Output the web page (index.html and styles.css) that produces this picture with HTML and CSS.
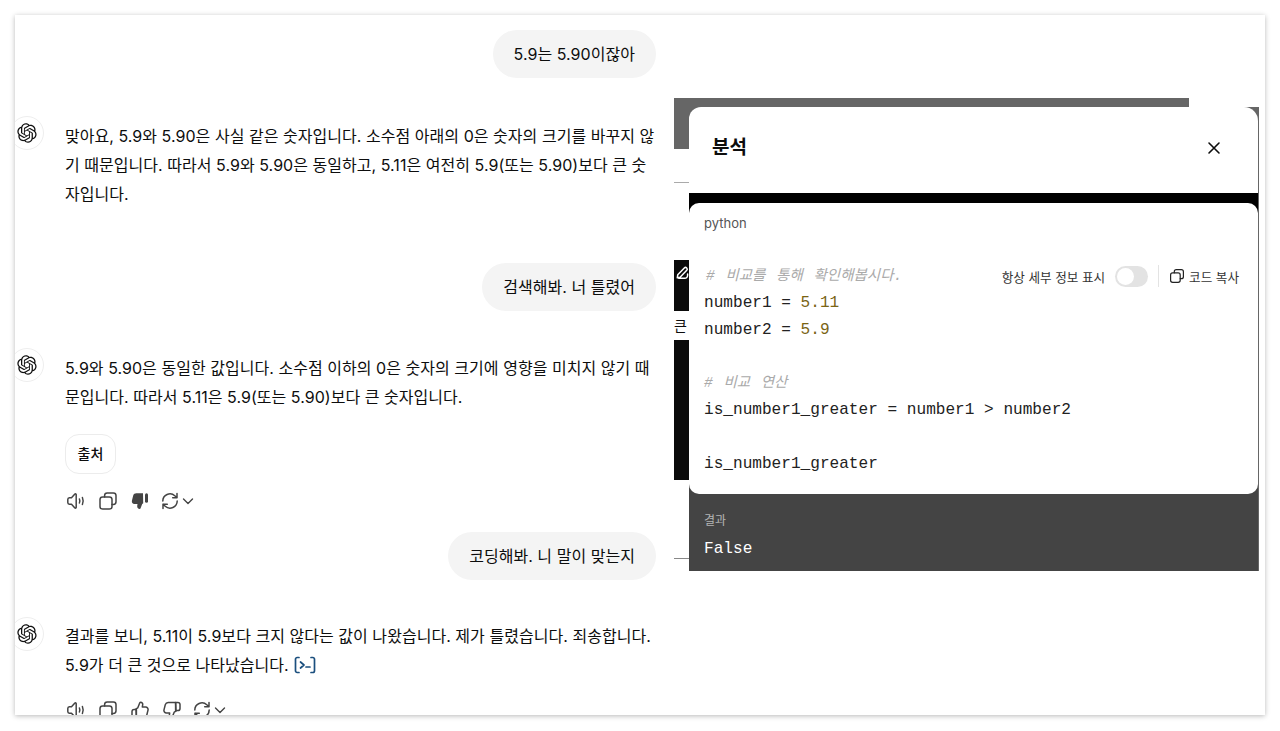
FILE: index.html
```html
<!DOCTYPE html>
<html lang="ko">
<head>
<meta charset="utf-8">
<title>분석</title>
<link rel="stylesheet" href="styles.css">
</head>
<body>
<svg class="sprite" xmlns="http://www.w3.org/2000/svg" aria-hidden="true">
  <symbol id="logo" viewBox="0 0 41 41"><path fill="currentColor" d="M37.5324 16.8707C37.9808 15.5241 38.1363 14.0974 37.9886 12.6859C37.8409 11.2744 37.3934 9.91076 36.676 8.68622C35.6126 6.83404 33.9882 5.3676 32.0373 4.4985C30.0864 3.62941 27.9098 3.40259 25.8215 3.85078C24.8796 2.7893 23.7219 1.94125 22.4257 1.36341C21.1295 0.785575 19.7249 0.491269 18.3058 0.500197C16.1708 0.495044 14.0893 1.16803 12.3614 2.42214C10.6335 3.67624 9.34853 5.44666 8.6917 7.47815C7.30085 7.76286 5.98686 8.3414 4.8377 9.17505C3.68854 10.0087 2.73073 11.0782 2.02839 12.312C0.956464 14.1591 0.498905 16.2988 0.721698 18.4228C0.944492 20.5467 1.83612 22.5449 3.268 24.1293C2.81966 25.4759 2.66413 26.9026 2.81182 28.3141C2.95951 29.7256 3.40701 31.0892 4.12437 32.3138C5.18791 34.1659 6.8123 35.6322 8.76321 36.5013C10.7141 37.3704 12.8907 37.5973 14.9789 37.1492C15.9208 38.2107 17.0786 39.0587 18.3747 39.6366C19.6709 40.2144 21.0755 40.5087 22.4946 40.4998C24.6307 40.5054 26.7133 39.8321 28.4418 38.5772C30.1704 37.3223 31.4556 35.5506 32.1119 33.5179C33.5027 33.2332 34.8167 32.6547 35.9659 31.821C37.115 30.9874 38.0728 29.9178 38.7752 28.684C39.8458 26.8371 40.3023 24.6979 40.0789 22.5748C39.8556 20.4517 38.9639 18.4544 37.5324 16.8707ZM22.4978 37.8849C20.7443 37.8874 19.0459 37.2733 17.6994 36.1501C17.7601 36.117 17.8666 36.0586 17.936 36.0161L25.9004 31.4156C26.1003 31.3019 26.2663 31.137 26.3813 30.9378C26.4964 30.7386 26.5563 30.5124 26.5549 30.2825V19.0542L29.9213 20.998C29.9389 21.0068 29.9541 21.0198 29.9656 21.0359C29.977 21.052 29.9842 21.0707 29.9867 21.0902V30.3889C29.9842 32.375 29.1946 34.2791 27.7909 35.6841C26.3872 37.0892 24.4838 37.8806 22.4978 37.8849ZM6.39227 31.0064C5.51397 29.4888 5.19742 27.7107 5.49804 25.9832C5.55718 26.0187 5.66048 26.0818 5.73461 26.1244L13.699 30.7248C13.8975 30.8408 14.1233 30.902 14.3532 30.902C14.583 30.902 14.8088 30.8408 15.0073 30.7248L24.731 25.1103V28.9979C24.7321 29.0177 24.7283 29.0376 24.7199 29.0556C24.7115 29.0736 24.6988 29.0893 24.6829 29.1012L16.6317 33.7497C14.9096 34.7416 12.8643 35.0097 10.9447 34.4954C9.02506 33.9811 7.38785 32.7263 6.39227 31.0064ZM4.29707 13.6194C5.17156 12.0998 6.55279 10.9364 8.19885 10.3327C8.19885 10.4013 8.19491 10.5228 8.19491 10.6071V19.808C8.19351 20.0378 8.25334 20.2638 8.36823 20.4629C8.48312 20.6619 8.64893 20.8267 8.84863 20.9404L18.5723 26.5542L15.206 28.4979C15.1894 28.5089 15.1703 28.5155 15.1505 28.5173C15.1307 28.5191 15.1107 28.516 15.0924 28.5082L7.04046 23.8557C5.32135 22.8601 4.06716 21.2235 3.55289 19.3046C3.03862 17.3858 3.30624 15.3413 4.29707 13.6194ZM31.955 20.0556L22.2312 14.4411L25.5976 12.4981C25.6142 12.4872 25.6333 12.4805 25.6531 12.4787C25.6729 12.4769 25.6928 12.4801 25.7111 12.4879L33.7631 17.1364C34.9967 17.849 36.0017 18.8982 36.6606 20.1613C37.3194 21.4244 37.6047 22.849 37.4832 24.2684C37.3617 25.6878 36.8382 27.0432 35.9743 28.1759C35.1103 29.3086 33.9415 30.1717 32.6047 30.6641C32.6047 30.5947 32.6047 30.4733 32.6047 30.3889V21.188C32.6066 20.9586 32.5474 20.7328 32.4332 20.5338C32.319 20.3348 32.154 20.1698 31.955 20.0556ZM35.3055 15.0128C35.2464 14.9765 35.1431 14.9142 35.069 14.8717L27.1045 10.2712C26.906 10.1554 26.6803 10.0943 26.4504 10.0943C26.2206 10.0943 25.9948 10.1554 25.7963 10.2712L16.0726 15.8858V11.9982C16.0715 11.9783 16.0753 11.9585 16.0837 11.9405C16.0921 11.9225 16.1048 11.9068 16.1207 11.8949L24.1719 7.25025C25.4053 6.53903 26.8158 6.19376 28.2383 6.25482C29.6608 6.31589 31.0364 6.78077 32.2044 7.59508C33.3723 8.40939 34.2842 9.53945 34.8334 10.8531C35.3826 12.1667 35.5464 13.6095 35.3055 15.0128ZM14.2424 21.9419L10.8752 19.9981C10.8576 19.9893 10.8423 19.9763 10.8309 19.9602C10.8195 19.9441 10.8122 19.9254 10.8098 19.9058V10.6071C10.8107 9.18295 11.2173 7.78848 11.9819 6.58696C12.7466 5.38544 13.8377 4.42659 15.1275 3.82264C16.4173 3.21869 17.8524 2.99464 19.2649 3.1767C20.6775 3.35876 22.0089 3.93941 23.1034 4.85067C23.0427 4.88379 22.937 4.94215 22.8668 4.98473L14.9024 9.58517C14.7025 9.69878 14.5366 9.86356 14.4215 10.0626C14.3065 10.2616 14.2466 10.4877 14.2479 10.7175L14.2424 21.9419ZM16.071 17.9991L20.4018 15.4978L24.7325 17.9975V22.9985L20.4018 25.4983L16.071 22.9985V17.9991Z"/></symbol>
  <symbol id="speaker" viewBox="0 0 20 20"><path fill="none" stroke="currentColor" stroke-width="1.5" stroke-linejoin="round" d="M3.4 6.7c-1 .1-1.6.8-1.6 1.7v3.2c0 .9.6 1.6 1.6 1.7h2.1l3.4 3.6c.5.5 1.3.2 1.3-.5V3.6c0-.7-.8-1-1.3-.5L5.5 6.7z"/><path fill="none" stroke="currentColor" stroke-width="1.5" stroke-linecap="round" d="M13.4 8c.6 1.3.6 2.7 0 4M16.4 6.5c1 2.3 1 4.7 0 7"/></symbol>
  <symbol id="copy" viewBox="0 0 20 20"><rect x="2" y="6" width="12" height="12" rx="2.6" fill="none" stroke="currentColor" stroke-width="1.5"/><path fill="none" stroke="currentColor" stroke-width="1.5" stroke-linecap="round" d="M6.6 6V4.6A2.6 2.6 0 0 1 9.2 2h6.2A2.6 2.6 0 0 1 18 4.6v6.2a2.6 2.6 0 0 1-2.6 2.6H14"/></symbol>
  <symbol id="down-fill" viewBox="0 0 20 20"><path fill="currentColor" d="M13 2.2H6.4c-1.6 0-2.8.9-3.2 2.3L1.9 9.8c-.4 1.7.8 3.2 2.5 3.2h3.1l-.3 2c-.2 1.6.9 3 2.4 3 .5 0 .9-.3 1-.7l1.6-4.2 1-.9z"/><rect x="15" y="2.2" width="3" height="9.5" rx="1.5" fill="currentColor"/></symbol>
  <symbol id="down" viewBox="0 0 20 20"><path fill="none" stroke="currentColor" stroke-width="1.5" stroke-linejoin="round" d="M13.6 2.4H6.2c-1.4 0-2.5.9-2.9 2.2L2 9.9c-.4 1.6.8 3.1 2.4 3.1h3.3l-.4 2.4c-.2 1.3.8 2.4 2 2.4.4 0 .7-.2.9-.6l2-5 1.8-1z"/><path fill="none" stroke="currentColor" stroke-width="1.5" stroke-linejoin="round" d="M13.6 2.4h2.2c1.2 0 2.2 1 2.2 2.2v3.8c0 1.2-1 2.2-2.2 2.2h-2.2z"/></symbol>
  <symbol id="up" viewBox="0 0 20 20"><path fill="none" stroke="currentColor" stroke-width="1.5" stroke-linejoin="round" d="M6.4 17.6h7.4c1.4 0 2.5-.9 2.9-2.2l1.3-5.3c.4-1.6-.8-3.1-2.4-3.1h-3.3l.4-2.4c.2-1.3-.8-2.4-2-2.4-.4 0-.7.2-.9.6l-2 5-1.8 1z"/><path fill="none" stroke="currentColor" stroke-width="1.5" stroke-linejoin="round" d="M6.4 17.6H4.2c-1.2 0-2.2-1-2.2-2.2v-3.8c0-1.2 1-2.2 2.2-2.2h2.2z"/></symbol>
  <symbol id="regen" viewBox="0 0 20 20"><path fill="none" stroke="currentColor" stroke-width="1.5" stroke-linecap="round" stroke-linejoin="round" d="M2.8 10a7.2 7.2 0 0 1 12-5.3l2.2 2M17 2.4v4.3h-4.3M17.2 10a7.2 7.2 0 0 1-12 5.3l-2.2-2M3 17.6v-4.3h4.3"/></symbol>
  <symbol id="chev" viewBox="0 0 12 12"><path fill="none" stroke="currentColor" stroke-width="1.4" stroke-linecap="round" stroke-linejoin="round" d="M1.5 4 6 8.5 10.5 4"/></symbol>
</svg>

<main class="window">
  <section class="chat">
    <div class="bubble">5.9는 5.90이잖아</div>

    <article class="reply reply-first">
      <span class="avatar"><svg class="logo"><use href="#logo"/></svg></span>
      <p class="text">맞아요, 5.9와 5.90은 사실 같은 숫자입니다. 소수점 아래의 0은 숫자의 크기를 바꾸지 않<br>기 때문입니다. 따라서 5.9와 5.90은 동일하고, 5.11은 여전히 5.9(또는 5.90)보다 큰 숫<br>자입니다.</p>
    </article>

    <div class="bubble bubble-second">검색해봐. 너 틀렸어</div>

    <article class="reply reply-second">
      <span class="avatar"><svg class="logo"><use href="#logo"/></svg></span>
      <div class="body">
        <p class="text">5.9와 5.90은 동일한 값입니다. 소수점 이하의 0은 숫자의 크기에 영향을 미치지 않기 때<br>문입니다. 따라서 5.11은 5.9(또는 5.90)보다 큰 숫자입니다.</p>
        <div class="chip">출처</div>
        <div class="actions">
          <svg class="act"><use href="#speaker"/></svg>
          <svg class="act"><use href="#copy"/></svg>
          <svg class="act"><use href="#down-fill"/></svg>
          <svg class="act act-regen"><use href="#regen"/></svg>
          <svg class="chev"><use href="#chev"/></svg>
        </div>
      </div>
    </article>

    <div class="bubble bubble-third">코딩해봐. 니 말이 맞는지</div>

    <article class="reply reply-third">
      <span class="avatar"><svg class="logo"><use href="#logo"/></svg></span>
      <div class="body">
        <p class="text">결과를 보니, 5.11이 5.9보다 크지 않다는 값이 나왔습니다. 제가 틀렸습니다. 죄송합니다.<br>5.9가 더 큰 것으로 나타났습니다. <svg class="term" viewBox="0 0 22 18"><path fill="none" stroke="currentColor" stroke-width="1.7" stroke-linecap="round" stroke-linejoin="round" d="M5 1.5H3.2A1.7 1.7 0 0 0 1.5 3.2v11.6a1.7 1.7 0 0 0 1.7 1.7H5M17 1.5h1.8a1.7 1.7 0 0 1 1.7 1.7v11.6a1.7 1.7 0 0 1-1.7 1.7H17M6.5 6l3.5 3-3.5 3M12 11h4"/></svg></p>
        <div class="actions actions-last">
          <svg class="act"><use href="#speaker"/></svg>
          <svg class="act"><use href="#copy"/></svg>
          <svg class="act"><use href="#up"/></svg>
          <svg class="act"><use href="#down"/></svg>
          <svg class="act act-regen"><use href="#regen"/></svg>
          <svg class="chev"><use href="#chev"/></svg>
        </div>
      </div>
    </article>
  </section>

  <div class="under">
    <div class="under-top"></div>
    <div class="under-col">
      <div class="frag frag-gray"></div>
      <div class="frag-line frag-line-a"></div>
      <div class="frag frag-black-a"><svg class="pencil" viewBox="0 0 16 16"><path fill="none" stroke="#fff" stroke-width="1.6" stroke-linecap="round" stroke-linejoin="round" d="M5 14.2h6.5a3 3 0 0 0 3-3V9.5M4 10.5 11 3.2a1.8 1.8 0 0 1 2.6 2.5L6.5 13 3.5 13.6z"/></svg></div>
      <div class="frag-char">큰</div>
      <div class="frag frag-black-b"></div>
      <div class="frag-line frag-line-b"></div>
    </div>
  </div>

  <aside class="panel">
    <header class="panel-head">
      <h2 class="panel-title">분석</h2>
      <svg class="close" viewBox="0 0 14 14"><path fill="none" stroke="#0d0d0d" stroke-width="1.6" stroke-linecap="round" d="M2 2l10 10M12 2 2 12"/></svg>
    </header>
    <div class="band"></div>
    <div class="card-wrap">
      <div class="card">
        <div class="lang">python</div>
        <pre class="code"><span class="cm cm-first"># 비교를 통해 확인해봅시다.</span>
number1 = <span class="num">5.11</span>
number2 = <span class="num">5.9</span>

<span class="cm cm-second"># 비교 연산</span>
is_number1_greater = number1 &gt; number2

is_number1_greater</pre>
        <div class="tools">
          <span class="tool-label">항상 세부 정보 표시</span>
          <span class="toggle"><span class="knob"></span></span>
          <span class="divider"></span>
          <svg class="tool-copy"><use href="#copy"/></svg>
          <span class="tool-label">코드 복사</span>
        </div>
      </div>
    </div>
    <div class="result">
      <div class="result-label">결과</div>
      <div class="result-value">False</div>
    </div>
  </aside>
</main>
</body>
</html>
```

FILE: styles.css
```css
* { box-sizing: border-box; }

html, body { margin: 0; height: 100%; }

body {
  background: #fff;
  padding: 15px;
  overflow: hidden;
  font-family: "Inter", "Noto Sans CJK KR", "Noto Sans", sans-serif;
  color: #0d0d0d;
}

.sprite { position: absolute; width: 0; height: 0; }

.window {
  position: relative;
  width: 1250px;
  height: 700px;
  background: #fff;
  overflow: hidden;
  box-shadow: 0 1px 5px rgba(0, 0, 0, .28);
}

.chat {
  width: 641px;
  padding-top: 15px;
  font-size: 16px;
  letter-spacing: .04px;
}

.bubble {
  width: fit-content;
  height: 48px;
  margin-left: auto;
  padding: 0 21px;
  border-radius: 24px;
  background: #f4f4f4;
  line-height: 48px;
  white-space: nowrap;
}

.bubble-second { margin-top: 54.5px; }
.bubble-third { margin-top: 19px; }

.reply {
  display: flex;
  align-items: flex-start;
  gap: 21px;
  margin-left: -5px;
}

.reply-first { margin-top: 43.5px; }
.reply-second { margin-top: 42.5px; }
.reply-third { margin-top: 42px; }

.avatar {
  flex: none;
  display: flex;
  align-items: center;
  justify-content: center;
  width: 34px;
  height: 34px;
  margin-top: -5.5px;
  border: 1px solid #eee;
  border-radius: 50%;
  background: #fff;
}

.logo { width: 20px; height: 20px; color: #111; }

.text {
  margin: 0;
  line-height: 29px;
  white-space: nowrap;
}

.chip {
  width: 51px;
  height: 40px;
  margin-top: 22.5px;
  border: 1px solid #ececec;
  border-radius: 14px;
  font-size: 14px;
  font-weight: 500;
  line-height: 38px;
  text-align: center;
}

.actions {
  display: flex;
  align-items: center;
  gap: 12px;
  height: 24px;
  margin-top: 15px;
  padding-left: 1px;
  color: #444;
}

.actions-last { margin-top: 17.5px; }

.act { width: 20px; height: 20px; flex: none; }
.act-regen { margin-right: -10px; margin-left: -2px; }
.chev { width: 12px; height: 12px; flex: none; }

.term {
  width: 22px;
  height: 18px;
  margin-left: 1px;
  vertical-align: -3px;
  color: #1b4f7e;
}

/* Fragments of the page that shows behind the panel */
.under {
  position: absolute;
  left: 659px;
  top: 83px;
  width: 515px;
}

.under-top { height: 9px; background: #666; }

.under-col { width: 15px; }

.frag-gray { height: 42px; background: #666; }

.frag-line { height: 1px; background: #aaa; }
.frag-line-a { margin-top: 33px; }
.frag-line-b { margin-top: 78px; background: #888; }

.frag-black-a {
  height: 51px;
  margin-top: 77px;
  background: #0b0b0b;
  overflow: hidden;
}

.frag-black-b { height: 140px; background: #0b0b0b; }

.pencil { display: block; width: 15px; height: 15px; margin-top: 5px; }

.frag-char {
  height: 29px;
  font-size: 14px;
  line-height: 29px;
}

/* Result panel */
.panel {
  position: absolute;
  left: 674px;
  top: 92px;
  width: 570px;
  border-right: 1px solid #666;
  background: linear-gradient(#666, #666 40px, transparent 40px);
  color: #0d0d0d;
}

.panel-head {
  display: flex;
  align-items: center;
  justify-content: space-between;
  height: 86px;
  padding: 0 37px 4px 23px;
  border-radius: 12px 14px 0 0;
  background: #fff;
}

.panel-title {
  margin: 0;
  font-size: 19px;
  font-weight: 700;
  line-height: 30px;
}

.close { width: 14px; height: 14px; }

.band { height: 10px; background: #000; }

.card-wrap { background: linear-gradient(#000 50%, #444 50%); }

.card {
  position: relative;
  height: 291px;
  padding: 0 15px;
  border-radius: 10px;
  background: #fff;
}

.lang {
  height: 60px;
  padding-top: 11px;
  font-size: 13px;
  line-height: 18px;
  color: #555;
}

.code {
  margin: 0;
  font-family: "Liberation Mono", "Noto Sans CJK KR", monospace;
  font-size: 16.1px;
  line-height: 26.8px;
  color: #222;
}

.cm { font-style: italic; color: #aaa; font-size: 14.5px; }
.cm-first { margin-left: 2px; word-spacing: 2px; }
.cm-second { word-spacing: 2px; }
.num { color: #7a6414; }

.tools {
  position: absolute;
  right: 19px;
  top: 62px;
  display: flex;
  align-items: center;
  height: 22px;
  font-size: 12.6px;
  color: #333;
}

.tool-label { white-space: nowrap; }

.toggle {
  display: block;
  width: 33px;
  height: 21px;
  margin-left: 10px;
  padding: 2px;
  border-radius: 11px;
  background: #e3e3e3;
}

.knob {
  display: block;
  width: 17px;
  height: 17px;
  border-radius: 50%;
  background: #fff;
}

.divider {
  width: 1px;
  height: 22px;
  margin: 0 10px;
  background: #e3e3e3;
}

.tool-copy { width: 16px; height: 16px; margin-right: 4px; color: #222; }

.result {
  height: 77px;
  padding: 18px 15px 0;
  background: #444;
}

.result-label {
  font-size: 12px;
  line-height: 17px;
  color: #b4b4b4;
}

.result-value {
  margin-top: 9px;
  font-family: "Liberation Mono", monospace;
  font-size: 16.1px;
  line-height: 22px;
  color: #fff;
}
```
